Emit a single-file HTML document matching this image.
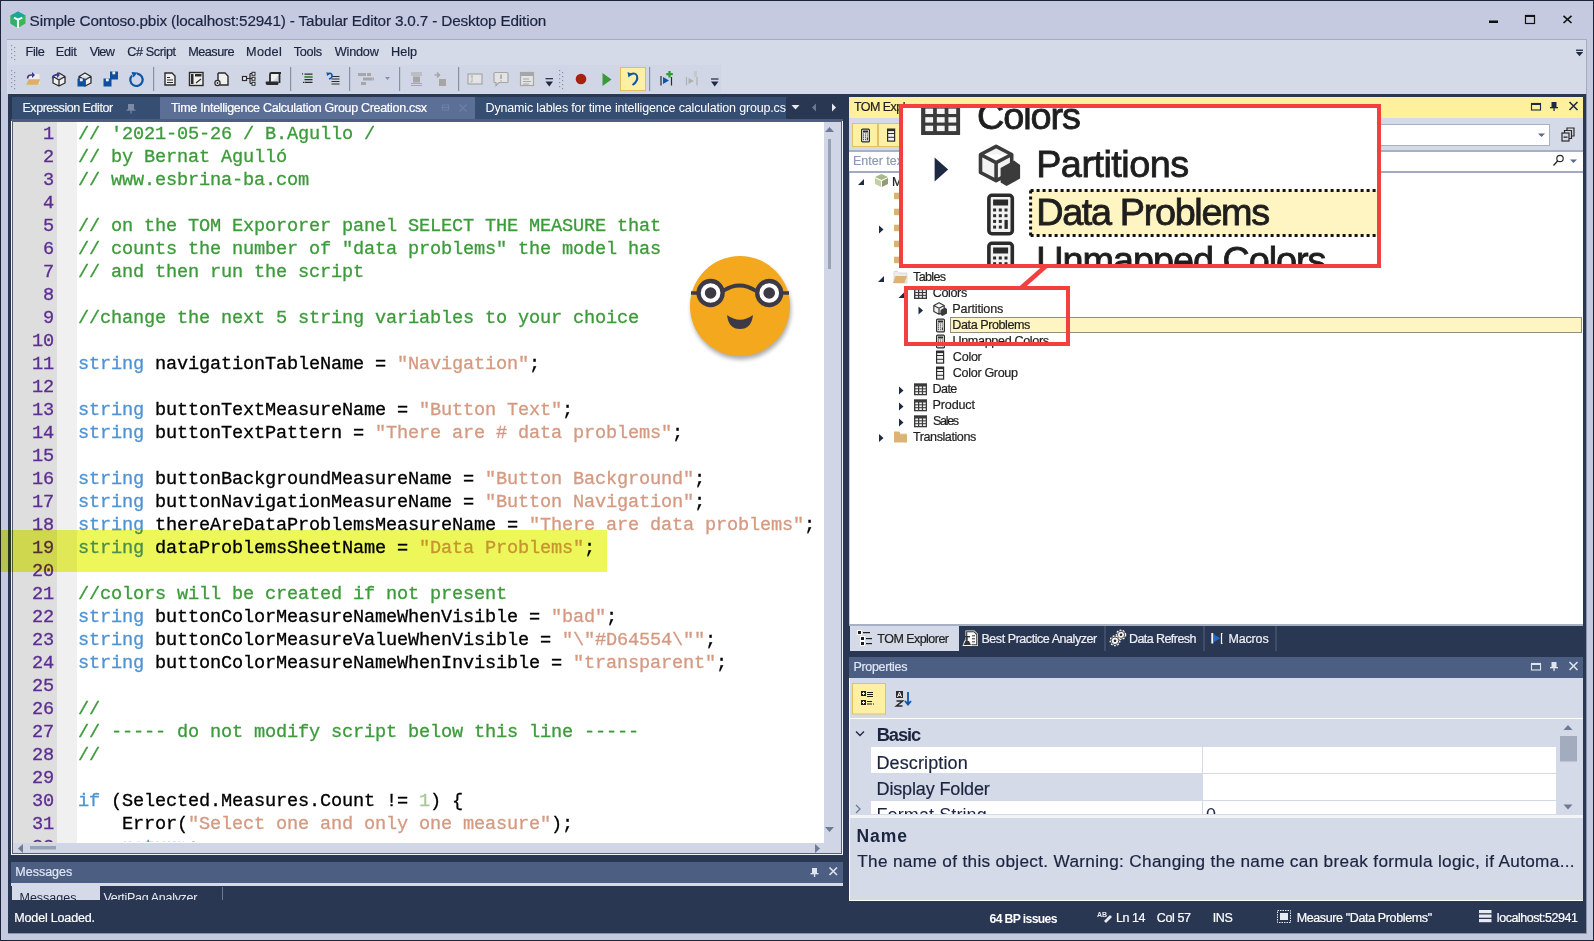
<!DOCTYPE html>
<html><head><meta charset="utf-8">
<style>
*{margin:0;padding:0;box-sizing:border-box}
html,body{width:1594px;height:941px;overflow:hidden;background:#c5cae0;font-family:"Liberation Sans",sans-serif}
.a{position:absolute}
.t{position:absolute;white-space:pre;line-height:1}
svg{position:absolute;overflow:visible}
.code{position:absolute;font-family:"Liberation Mono",monospace;white-space:pre;color:#000;-webkit-text-stroke:0.3px currentColor}
.c{color:#3c9b3a}.k{color:#4f93d3}.s{color:#d49a82}.n{color:#a8c79b}
</style></head><body>

<div class="a" style="left:0px;top:0px;width:1594px;height:941px;background:#c5cae0;border:1px solid #1b2438"></div>
<div class="a" style="left:7px;top:39px;width:1580px;height:55px;background:#d5dae9;border-top:1px solid #a4acc2;border-right:1px solid #a4acc2"></div>
<div class="a" style="left:8px;top:65px;width:713px;height:28px;background:#d0d6e5;"></div>
<div class="a" style="left:8px;top:94px;width:1579px;height:840px;background:#8d94aa;"></div>
<div class="a" style="left:8px;top:94px;width:1578px;height:839px;background:#293753;"></div>
<div class="a" style="left:12px;top:97px;width:148px;height:22px;background:#364e71;"></div>
<div class="a" style="left:160px;top:97px;width:315px;height:22px;background:#5b6f97;"></div>
<div class="a" style="left:475px;top:97px;width:311px;height:22px;background:#364e71;"></div>
<div class="a" style="left:11px;top:119px;width:832px;height:3px;background:#4a5e80;"></div>
<div class="a" style="left:11px;top:121px;width:832px;height:734px;background:#f4f5f9;"></div>
<div class="a" style="left:12px;top:121px;width:830px;height:733px;background:#5a5e66;"></div>
<div class="a" style="left:13px;top:122px;width:828px;height:731px;background:#fff;"></div>
<div class="a" style="left:13px;top:122px;width:44px;height:721px;background:#dedede;"></div>
<div class="a" style="left:57px;top:122px;width:20px;height:721px;background:#f0f0f0;"></div>
<div class="a" style="left:824px;top:122px;width:17px;height:721px;background:#d0d6e5;"></div>
<div class="a" style="left:13px;top:843px;width:828px;height:10px;background:#d0d6e5;"></div>
<div class="a" style="left:849px;top:97px;width:734px;height:21px;background:#fff09b;"></div>
<div class="a" style="left:849px;top:118px;width:734px;height:33px;background:#d5dae9;"></div>
<div class="a" style="left:849px;top:150px;width:734px;height:2px;background:#a8b0c4;"></div>
<div class="a" style="left:849px;top:152px;width:734px;height:19px;background:#fff;"></div>
<div class="a" style="left:849px;top:171px;width:734px;height:2px;background:#a3abc0;"></div>
<div class="a" style="left:849px;top:173px;width:734px;height:451px;background:#fff;"></div>
<div class="a" style="left:849px;top:173px;width:1px;height:451px;background:#c8cedc;"></div>
<div class="a" style="left:849px;top:624px;width:734px;height:2px;background:#a8b0c4;"></div>
<div class="a" style="left:850px;top:626px;width:109px;height:25px;background:#d5dae9;"></div>
<div class="a" style="left:849px;top:657px;width:734px;height:21px;background:#4c5f82;"></div>
<div class="a" style="left:849px;top:678px;width:734px;height:223px;background:#fff;"></div>
<div class="a" style="left:850px;top:678px;width:733px;height:222px;background:#d5dae9;"></div>
<div class="a" style="left:849px;top:718px;width:734px;height:1px;background:#fff;"></div>
<div class="a" style="left:11px;top:862px;width:832px;height:21px;background:#4c5f82;"></div>
<div class="a" style="left:11px;top:883px;width:832px;height:3px;background:#d5dae9;"></div>
<div class="a" style="left:12px;top:886px;width:88px;height:14px;background:#d5dae9;"></div>
<div class="a" style="left:871px;top:747px;width:331px;height:26px;background:#fff;"></div>
<div class="a" style="left:1203px;top:747px;width:353px;height:26px;background:#fff;"></div>
<div class="a" style="left:1203px;top:774px;width:353px;height:26px;background:#fff;"></div>
<div class="a" style="left:871px;top:801px;width:331px;height:13px;background:#fff;"></div>
<div class="a" style="left:1203px;top:801px;width:353px;height:13px;background:#fff;"></div>
<div class="a" style="left:871px;top:773px;width:685px;height:1px;background:#d3d9e6;"></div>
<div class="a" style="left:871px;top:800px;width:685px;height:1px;background:#d3d9e6;"></div>
<div class="a" style="left:1202px;top:747px;width:1px;height:67px;background:#d3d9e6;"></div>
<div class="a" style="left:850px;top:815px;width:733px;height:3px;background:#f2f4f8;"></div>
<div class="a" style="left:871px;top:801px;width:685px;height:13px;overflow:hidden"><div class="t" style="left:5.5px;top:5px;font-size:18px;color:#1b2540;letter-spacing:0.1px">Format String</div><div class="t" style="left:335px;top:5px;font-size:18px;color:#1b2540">0</div></div>
<div class="a" style="left:12px;top:886px;width:830px;height:14px;overflow:hidden"><div class="t" style="left:7.5px;top:5.5px;font-size:12.5px;color:#1b2540">Messages</div><div class="t" style="left:91.5px;top:5.5px;font-size:12.5px;color:#e8ebf2;letter-spacing:-0.3px">VertiPaq Analyzer</div><div class="a" style="left:210px;top:1px;width:1px;height:13px;background:#6a7896"></div></div>
<div class="a" style="left:475px;top:97px;width:311px;height:22px;overflow:hidden"><div class="t" style="left:10.6px;top:4.7px;font-size:12.5px;color:#fff;letter-spacing:-0.17px">Dynamic lables for time intelligence calculation group.csx</div></div>
<div class="a" style="left:13px;top:122px;width:811px;height:720px;overflow:hidden">
<div class="code" style="left:65px;top:4.35px;font-size:18.6px;line-height:1;letter-spacing:-0.16px"><span class="c">// &#x27;2021-05-26 / B.Agullo /</span></div>
<div class="code" style="left:0px;width:41px;text-align:right;top:4.35px;font-size:18.6px;line-height:1;letter-spacing:-0.16px;color:#5c2d91">1</div>
<div class="code" style="left:65px;top:27.35px;font-size:18.6px;line-height:1;letter-spacing:-0.16px"><span class="c">// by Bernat Agulló</span></div>
<div class="code" style="left:0px;width:41px;text-align:right;top:27.35px;font-size:18.6px;line-height:1;letter-spacing:-0.16px;color:#5c2d91">2</div>
<div class="code" style="left:65px;top:50.35px;font-size:18.6px;line-height:1;letter-spacing:-0.16px"><span class="c">// www.esbrina-ba.com</span></div>
<div class="code" style="left:0px;width:41px;text-align:right;top:50.35px;font-size:18.6px;line-height:1;letter-spacing:-0.16px;color:#5c2d91">3</div>
<div class="code" style="left:65px;top:73.35px;font-size:18.6px;line-height:1;letter-spacing:-0.16px"></div>
<div class="code" style="left:0px;width:41px;text-align:right;top:73.35px;font-size:18.6px;line-height:1;letter-spacing:-0.16px;color:#5c2d91">4</div>
<div class="code" style="left:65px;top:96.35px;font-size:18.6px;line-height:1;letter-spacing:-0.16px"><span class="c">// on the TOM Expororer panel SELECT THE MEASURE that</span></div>
<div class="code" style="left:0px;width:41px;text-align:right;top:96.35px;font-size:18.6px;line-height:1;letter-spacing:-0.16px;color:#5c2d91">5</div>
<div class="code" style="left:65px;top:119.35px;font-size:18.6px;line-height:1;letter-spacing:-0.16px"><span class="c">// counts the number of &quot;data problems&quot; the model has</span></div>
<div class="code" style="left:0px;width:41px;text-align:right;top:119.35px;font-size:18.6px;line-height:1;letter-spacing:-0.16px;color:#5c2d91">6</div>
<div class="code" style="left:65px;top:142.35px;font-size:18.6px;line-height:1;letter-spacing:-0.16px"><span class="c">// and then run the script</span></div>
<div class="code" style="left:0px;width:41px;text-align:right;top:142.35px;font-size:18.6px;line-height:1;letter-spacing:-0.16px;color:#5c2d91">7</div>
<div class="code" style="left:65px;top:165.35px;font-size:18.6px;line-height:1;letter-spacing:-0.16px"></div>
<div class="code" style="left:0px;width:41px;text-align:right;top:165.35px;font-size:18.6px;line-height:1;letter-spacing:-0.16px;color:#5c2d91">8</div>
<div class="code" style="left:65px;top:188.35px;font-size:18.6px;line-height:1;letter-spacing:-0.16px"><span class="c">//change the next 5 string variables to your choice</span></div>
<div class="code" style="left:0px;width:41px;text-align:right;top:188.35px;font-size:18.6px;line-height:1;letter-spacing:-0.16px;color:#5c2d91">9</div>
<div class="code" style="left:65px;top:211.35px;font-size:18.6px;line-height:1;letter-spacing:-0.16px"></div>
<div class="code" style="left:0px;width:41px;text-align:right;top:211.35px;font-size:18.6px;line-height:1;letter-spacing:-0.16px;color:#5c2d91">10</div>
<div class="code" style="left:65px;top:234.35px;font-size:18.6px;line-height:1;letter-spacing:-0.16px"><span class="k">string</span> navigationTableName = <span class="s">"Navigation"</span>;</div>
<div class="code" style="left:0px;width:41px;text-align:right;top:234.35px;font-size:18.6px;line-height:1;letter-spacing:-0.16px;color:#5c2d91">11</div>
<div class="code" style="left:65px;top:257.35px;font-size:18.6px;line-height:1;letter-spacing:-0.16px"></div>
<div class="code" style="left:0px;width:41px;text-align:right;top:257.35px;font-size:18.6px;line-height:1;letter-spacing:-0.16px;color:#5c2d91">12</div>
<div class="code" style="left:65px;top:280.35px;font-size:18.6px;line-height:1;letter-spacing:-0.16px"><span class="k">string</span> buttonTextMeasureName = <span class="s">"Button Text"</span>;</div>
<div class="code" style="left:0px;width:41px;text-align:right;top:280.35px;font-size:18.6px;line-height:1;letter-spacing:-0.16px;color:#5c2d91">13</div>
<div class="code" style="left:65px;top:303.35px;font-size:18.6px;line-height:1;letter-spacing:-0.16px"><span class="k">string</span> buttonTextPattern = <span class="s">"There are # data problems"</span>;</div>
<div class="code" style="left:0px;width:41px;text-align:right;top:303.35px;font-size:18.6px;line-height:1;letter-spacing:-0.16px;color:#5c2d91">14</div>
<div class="code" style="left:65px;top:326.35px;font-size:18.6px;line-height:1;letter-spacing:-0.16px"></div>
<div class="code" style="left:0px;width:41px;text-align:right;top:326.35px;font-size:18.6px;line-height:1;letter-spacing:-0.16px;color:#5c2d91">15</div>
<div class="code" style="left:65px;top:349.35px;font-size:18.6px;line-height:1;letter-spacing:-0.16px"><span class="k">string</span> buttonBackgroundMeasureName = <span class="s">"Button Background"</span>;</div>
<div class="code" style="left:0px;width:41px;text-align:right;top:349.35px;font-size:18.6px;line-height:1;letter-spacing:-0.16px;color:#5c2d91">16</div>
<div class="code" style="left:65px;top:372.35px;font-size:18.6px;line-height:1;letter-spacing:-0.16px"><span class="k">string</span> buttonNavigationMeasureName = <span class="s">"Button Navigation"</span>;</div>
<div class="code" style="left:0px;width:41px;text-align:right;top:372.35px;font-size:18.6px;line-height:1;letter-spacing:-0.16px;color:#5c2d91">17</div>
<div class="code" style="left:65px;top:395.35px;font-size:18.6px;line-height:1;letter-spacing:-0.16px"><span class="k">string</span> thereAreDataProblemsMeasureName = <span class="s">"There are data problems"</span>;</div>
<div class="code" style="left:0px;width:41px;text-align:right;top:395.35px;font-size:18.6px;line-height:1;letter-spacing:-0.16px;color:#5c2d91">18</div>
<div class="code" style="left:65px;top:418.35px;font-size:18.6px;line-height:1;letter-spacing:-0.16px"><span class="k">string</span> dataProblemsSheetName = <span class="s">"Data Problems"</span>;</div>
<div class="code" style="left:0px;width:41px;text-align:right;top:418.35px;font-size:18.6px;line-height:1;letter-spacing:-0.16px;color:#5c2d91">19</div>
<div class="code" style="left:65px;top:441.35px;font-size:18.6px;line-height:1;letter-spacing:-0.16px"></div>
<div class="code" style="left:0px;width:41px;text-align:right;top:441.35px;font-size:18.6px;line-height:1;letter-spacing:-0.16px;color:#5c2d91">20</div>
<div class="code" style="left:65px;top:464.35px;font-size:18.6px;line-height:1;letter-spacing:-0.16px"><span class="c">//colors will be created if not present</span></div>
<div class="code" style="left:0px;width:41px;text-align:right;top:464.35px;font-size:18.6px;line-height:1;letter-spacing:-0.16px;color:#5c2d91">21</div>
<div class="code" style="left:65px;top:487.35px;font-size:18.6px;line-height:1;letter-spacing:-0.16px"><span class="k">string</span> buttonColorMeasureNameWhenVisible = <span class="s">"bad"</span>;</div>
<div class="code" style="left:0px;width:41px;text-align:right;top:487.35px;font-size:18.6px;line-height:1;letter-spacing:-0.16px;color:#5c2d91">22</div>
<div class="code" style="left:65px;top:510.35px;font-size:18.6px;line-height:1;letter-spacing:-0.16px"><span class="k">string</span> buttonColorMeasureValueWhenVisible = <span class="s">"\&quot;#D64554\&quot;"</span>;</div>
<div class="code" style="left:0px;width:41px;text-align:right;top:510.35px;font-size:18.6px;line-height:1;letter-spacing:-0.16px;color:#5c2d91">23</div>
<div class="code" style="left:65px;top:533.35px;font-size:18.6px;line-height:1;letter-spacing:-0.16px"><span class="k">string</span> buttonColorMeasureNameWhenInvisible = <span class="s">"transparent"</span>;</div>
<div class="code" style="left:0px;width:41px;text-align:right;top:533.35px;font-size:18.6px;line-height:1;letter-spacing:-0.16px;color:#5c2d91">24</div>
<div class="code" style="left:65px;top:556.35px;font-size:18.6px;line-height:1;letter-spacing:-0.16px"></div>
<div class="code" style="left:0px;width:41px;text-align:right;top:556.35px;font-size:18.6px;line-height:1;letter-spacing:-0.16px;color:#5c2d91">25</div>
<div class="code" style="left:65px;top:579.35px;font-size:18.6px;line-height:1;letter-spacing:-0.16px"><span class="c">//</span></div>
<div class="code" style="left:0px;width:41px;text-align:right;top:579.35px;font-size:18.6px;line-height:1;letter-spacing:-0.16px;color:#5c2d91">26</div>
<div class="code" style="left:65px;top:602.35px;font-size:18.6px;line-height:1;letter-spacing:-0.16px"><span class="c">// ----- do not modify script below this line -----</span></div>
<div class="code" style="left:0px;width:41px;text-align:right;top:602.35px;font-size:18.6px;line-height:1;letter-spacing:-0.16px;color:#5c2d91">27</div>
<div class="code" style="left:65px;top:625.35px;font-size:18.6px;line-height:1;letter-spacing:-0.16px"><span class="c">//</span></div>
<div class="code" style="left:0px;width:41px;text-align:right;top:625.35px;font-size:18.6px;line-height:1;letter-spacing:-0.16px;color:#5c2d91">28</div>
<div class="code" style="left:65px;top:648.35px;font-size:18.6px;line-height:1;letter-spacing:-0.16px"></div>
<div class="code" style="left:0px;width:41px;text-align:right;top:648.35px;font-size:18.6px;line-height:1;letter-spacing:-0.16px;color:#5c2d91">29</div>
<div class="code" style="left:65px;top:671.35px;font-size:18.6px;line-height:1;letter-spacing:-0.16px"><span class="k">if</span> (Selected.Measures.Count != <span class="n">1</span>) {</div>
<div class="code" style="left:0px;width:41px;text-align:right;top:671.35px;font-size:18.6px;line-height:1;letter-spacing:-0.16px;color:#5c2d91">30</div>
<div class="code" style="left:65px;top:694.35px;font-size:18.6px;line-height:1;letter-spacing:-0.16px">    Error(<span class="s">"Select one and only one measure"</span>);</div>
<div class="code" style="left:0px;width:41px;text-align:right;top:694.35px;font-size:18.6px;line-height:1;letter-spacing:-0.16px;color:#5c2d91">31</div>
<div class="code" style="left:65px;top:717.35px;font-size:18.6px;line-height:1;letter-spacing:-0.16px">    <span class="k">return</span>;</div>
<div class="code" style="left:0px;width:41px;text-align:right;top:717.35px;font-size:18.6px;line-height:1;letter-spacing:-0.16px;color:#5c2d91">32</div>
</div>
<svg style="left:0;top:0" width="1594" height="941" viewBox="0 0 1594 941"><path d="M18 11.5 L25.5 15.5 L25.5 23.5 L18 28 L10.5 23.5 L10.5 15.5 Z" fill="#3cb55a"/><path d="M10.5 15.5 L18 19 L18 28 L10.5 23.5 Z" fill="#33ae6a"/><path d="M18 11.5 L25.5 15.5 L18 19.2 L10.5 15.5 Z" fill="#17a89c"/><path d="M14 17.6 L18 19.6 L22.3 17.6 M18 19.5 V28" stroke="#f4fff4" stroke-width="2.1" fill="none"/><rect x="1489" y="20.5" width="9" height="2.5" fill="#111"/><rect x="1525.5" y="15.5" width="9" height="8" fill="none" stroke="#111" stroke-width="1.2"/><rect x="1525" y="15" width="10" height="2" fill="#111"/><path d="M1563.5 15.8 L1571.5 23 M1571.5 15.8 L1563.5 23" stroke="#111" stroke-width="1.6"/><rect x="1576" y="49.6" width="7" height="1.3" fill="#1e2a44"/><path d="M1575.8 52 h7.4 l-3.7 4.2 Z" fill="#1e2a44"/><rect x="11" y="45" width="1.2" height="1.2" fill="#8a93ac"/><rect x="14" y="47" width="1.2" height="1.2" fill="#8a93ac"/><rect x="11" y="49" width="1.2" height="1.2" fill="#8a93ac"/><rect x="14" y="51" width="1.2" height="1.2" fill="#8a93ac"/><rect x="11" y="53" width="1.2" height="1.2" fill="#8a93ac"/><rect x="14" y="55" width="1.2" height="1.2" fill="#8a93ac"/><rect x="11" y="57" width="1.2" height="1.2" fill="#8a93ac"/><rect x="14" y="59" width="1.2" height="1.2" fill="#8a93ac"/><rect x="11" y="70" width="1.2" height="1.2" fill="#8a93ac"/><rect x="14" y="72" width="1.2" height="1.2" fill="#8a93ac"/><rect x="11" y="74" width="1.2" height="1.2" fill="#8a93ac"/><rect x="14" y="76" width="1.2" height="1.2" fill="#8a93ac"/><rect x="11" y="78" width="1.2" height="1.2" fill="#8a93ac"/><rect x="14" y="80" width="1.2" height="1.2" fill="#8a93ac"/><rect x="11" y="82" width="1.2" height="1.2" fill="#8a93ac"/><rect x="14" y="84" width="1.2" height="1.2" fill="#8a93ac"/><rect x="11" y="86" width="1.2" height="1.2" fill="#8a93ac"/><rect x="14" y="88" width="1.2" height="1.2" fill="#8a93ac"/><rect x="559" y="70" width="1.2" height="1.2" fill="#8a93ac"/><rect x="562" y="72" width="1.2" height="1.2" fill="#8a93ac"/><rect x="559" y="74" width="1.2" height="1.2" fill="#8a93ac"/><rect x="562" y="76" width="1.2" height="1.2" fill="#8a93ac"/><rect x="559" y="78" width="1.2" height="1.2" fill="#8a93ac"/><rect x="562" y="80" width="1.2" height="1.2" fill="#8a93ac"/><rect x="559" y="82" width="1.2" height="1.2" fill="#8a93ac"/><rect x="562" y="84" width="1.2" height="1.2" fill="#8a93ac"/><rect x="559" y="86" width="1.2" height="1.2" fill="#8a93ac"/><rect x="562" y="88" width="1.2" height="1.2" fill="#8a93ac"/><rect x="153.0" y="67" width="1.2" height="24" fill="#8890a8"/><rect x="290.0" y="67" width="1.2" height="24" fill="#8890a8"/><rect x="349.0" y="67" width="1.2" height="24" fill="#8890a8"/><rect x="399.0" y="67" width="1.2" height="24" fill="#8890a8"/><rect x="458.0" y="67" width="1.2" height="24" fill="#8890a8"/><rect x="649.0" y="67" width="1.2" height="24" fill="#8890a8"/><rect x="28.5" y="73.5" width="11.5" height="11" fill="#eeeeee" stroke="#d6d6d6" stroke-width="1"/><path d="M26.3 84.8 L28.8 79.2 h11.4 l-2.2 5.6 Z" fill="#dcb06a"/><path d="M27.6 78.6 q0 -3.6 3.6 -3.6 h1.2" stroke="#3d3b8e" stroke-width="1.7" fill="none"/><path d="M32 72 l3 3 l-3 3 Z" fill="#3d3b8e"/><g transform="translate(52,72) scale(1.0)"><path d="M7 1 L13 4.5 L13 11 L7 14 L1 11 L1 4.5 Z M1 4.5 L7 8 L13 4.5 M7 8 L7 14" fill="#f0f0f0" stroke="#2b2b2b" stroke-width="1.30" stroke-linejoin="round"/></g><path d="M52.6 78.6 q0 -3.6 3.6 -3.6 h1.2" stroke="#3d3b8e" stroke-width="1.7" fill="none"/><path d="M57 72 l3 3 l-3 3 Z" fill="#3d3b8e"/><g transform="translate(78,72) scale(1.0)"><path d="M7 1 L13 4.5 L13 11 L7 14 L1 11 L1 4.5 Z M1 4.5 L7 8 L13 4.5 M7 8 L7 14" fill="#f0f0f0" stroke="#2b2b2b" stroke-width="1.30" stroke-linejoin="round"/></g><rect x="77.5" y="78.5" width="8" height="8" fill="#0e4fa0"/><rect x="79.9" y="78.5" width="2.8" height="2.8" fill="#f0f0f0"/><rect x="110" y="71.5" width="8" height="8" fill="#0e4fa0"/><rect x="112.4" y="71.5" width="2.8" height="2.8" fill="#f0f0f0"/><rect x="103.5" y="78.5" width="8" height="8" fill="#0e4fa0"/><rect x="105.9" y="78.5" width="2.8" height="2.8" fill="#f0f0f0"/><path d="M132 75.5 A6.2 6.2 0 1 0 137 73.6" stroke="#0d55a8" stroke-width="2.2" fill="none"/><path d="M131.5 72 L137.5 72.5 L133.5 77.5 Z" fill="#0d55a8"/><path d="M165 73 h7 l3 3 v9 h-10 Z" fill="#f0f0f0" stroke="#2b2b2b" stroke-width="1.4"/><path d="M167 77.5 h3 M167 80 h6 M167 82.5 h6" stroke="#2b2b2b" stroke-width="1.2"/><rect x="189.5" y="72.5" width="13.5" height="13" fill="#f0f0f0" stroke="#2b2b2b" stroke-width="1.4"/><rect x="191" y="74" width="2.5" height="10" fill="#2b2b2b"/><rect x="195" y="74" width="6.5" height="2.5" fill="#2b2b2b"/><path d="M196 83 l5 -4" stroke="#2b2b2b" stroke-width="1.2"/><path d="M218 73 h7 l3 3 v9 h-8" fill="#f0f0f0" stroke="#2b2b2b" stroke-width="1.4"/><path d="M218 73 v7" stroke="#2b2b2b" stroke-width="1.4"/><circle cx="217.5" cy="83" r="2.6" fill="#f0f0f0" stroke="#2b2b2b" stroke-width="1.2"/><circle cx="217.5" cy="83" r="0.9" fill="#2b2b2b"/><rect x="242.5" y="76.5" width="4" height="4" fill="#f0f0f0" stroke="#2b2b2b" stroke-width="1.2"/><path d="M246.5 78.5 h3.5 M250 73.5 v10 M250 73.5 h2 M250 78.5 h2 M250 83.5 h2" stroke="#2b2b2b" stroke-width="1.2" fill="none"/><rect x="252" y="72.3" width="3" height="3" fill="#f0f0f0" stroke="#2b2b2b" stroke-width="1"/><rect x="252" y="77.3" width="3" height="3" fill="#f0f0f0" stroke="#2b2b2b" stroke-width="1"/><rect x="252" y="82.3" width="3" height="3" fill="#f0f0f0" stroke="#2b2b2b" stroke-width="1"/><path d="M270 84 V74.5 q0 -1.5 1.5 -1.5 H281 M270 84 H267.5 q-1 0 -1 -1 v-0.5 h11 v1.5 H270 M279.5 73 v10" fill="#f0f0f0" stroke="#2b2b2b" stroke-width="1.8" stroke-linejoin="round"/><path d="M302 73.8 h1 M304.5 74.2 h8 M304.5 77 h8 M304.5 79.6 h8 M304.5 82.4 h8 M303 82.4 h1" stroke="#2b2b2b" stroke-width="1.2"/><path d="M304.5 77 h8" stroke="#2aa02a" stroke-width="1.2"/><path d="M331.5 76.5 h8 M331.5 79 h8 M331.5 81.5 h8 M331.5 84 h8" stroke="#2b2b2b" stroke-width="1.2"/><path d="M327 74 q4 -2 5 1 q0.5 3 -3 4" stroke="#0d55a8" stroke-width="1.6" fill="none"/><path d="M326.5 72 l0.5 4 l3 -2 Z" fill="#0d55a8"/><rect x="358" y="73" width="8" height="3" fill="#a6a6a6"/><rect x="367" y="73" width="4" height="3" fill="#a6a6a6"/><rect x="363" y="77.5" width="9" height="3" fill="#a6a6a6"/><rect x="372.5" y="77.5" width="1.5" height="3" fill="#a6a6a6"/><rect x="361" y="82" width="5" height="3" fill="#a6a6a6"/><path d="M385 77 h5 l-2.5 3 Z" fill="#8290ac"/><path d="M411 73 h11 M411 75 h11 M411 83.5 h11 M411 85.5 h11" stroke="#a6a6a6" stroke-width="1"/><rect x="413" y="76.5" width="7" height="6" fill="#a6a6a6"/><path d="M434.5 75 h5 M437 72.5 l2.5 2.5 l-2.5 2.5" stroke="#a6a6a6" stroke-width="1.6" fill="none"/><rect x="439" y="79" width="7" height="7" fill="#a6a6a6"/><rect x="468" y="74" width="14" height="10" fill="#e4e4e4" stroke="#a6a6a6" stroke-width="1.2"/><path d="M470.5 76 h1.5 v6 h-1.5 M472 76 h1" stroke="#a6a6a6" stroke-width="0.8" fill="none"/><path d="M495 72.5 h12 q1 0 1 1 v8 q0 1 -1 1 h-8 l-3 3 v-3 h-1 q-1 0 -1 -1 v-8 q0 -1 1 -1 Z" fill="#e4e4e4" stroke="#a6a6a6" stroke-width="1.2"/><path d="M501 74.5 v4.5 M501 80.5 v1" stroke="#a6a6a6" stroke-width="1.6"/><rect x="520.5" y="72.5" width="13" height="13" fill="#e4e4e4" stroke="#a6a6a6" stroke-width="1.2"/><rect x="520.5" y="72.5" width="13" height="3.5" fill="#a6a6a6"/><path d="M523 79 h6 M523 81.5 h8 M523 84 h6" stroke="#a6a6a6" stroke-width="1"/><path d="M545.5 78.7 h7.5" stroke="#1e2a44" stroke-width="1.2"/><path d="M545.5 81.5 h7.5 l-3.75 5 Z" fill="#1e2a44"/><circle cx="581" cy="79" r="5.3" fill="#a8200f"/><path d="M602.5 73 L611.5 79.5 L602.5 86 Z" fill="#3a9a3a"/><rect x="620.5" y="67.5" width="25" height="23" fill="#fdf0a3" stroke="#e2c062" stroke-width="1"/><path d="M630.5 74.5 q5 -2.5 6.5 1.5 q1.5 5 -4.5 9" stroke="#0d55a8" stroke-width="2" fill="none"/><path d="M627.5 72 l1 5.5 l4 -3.5 Z" fill="#0d55a8"/><path d="M661 76 v9.5 M671.5 77 v8.5" stroke="#2b2b2b" stroke-width="1.2"/><path d="M663 77 v7 l6 -3.5 Z" fill="#0d55a8"/><path d="M669.5 71 v6.5 M666.3 74.2 h6.5" stroke="#2aa02a" stroke-width="2.2"/><path d="M686.5 77 v8.5 M697 77 v8.5" stroke="#b0b0b0" stroke-width="1.2"/><path d="M688.5 78 v6 l5.5 -3 Z" fill="#b0b0b0"/><rect x="694" y="71" width="3" height="6" fill="#c8c8c8"/><path d="M711 79 h7.5" stroke="#1e2a44" stroke-width="1.2"/><path d="M711 81.5 h7.5 l-3.75 5 Z" fill="#1e2a44"/></svg>
<svg style="left:0;top:0" width="1594" height="941" viewBox="0 0 1594 941"><g fill="#7d8aa6"><rect x="128" y="104" width="6" height="6"/><rect x="126.5" y="109.5" width="9" height="1.2"/><rect x="130.5" y="110.5" width="1.2" height="3"/></g><g fill="#6e80a6"><rect x="442.5" y="105" width="6" height="5" fill="none" stroke="#6e80a6"/><rect x="441" y="107" width="9" height="1"/></g><path d="M459.5 104.5 L466.5 111.5 M466.5 104.5 L459.5 111.5" stroke="#6e80a6" stroke-width="1.2"/><path d="M791.5 105 h8 l-4 4.5 Z" fill="#e6e9f2"/><path d="M816 103.5 v8 l-4 -4 Z" fill="#6a7896"/><path d="M832 103.5 v8 l4 -4 Z" fill="#e6e9f2"/><path d="M825 132 h9 l-4.5 -5 Z" fill="#6e7a96"/><rect x="828" y="139" width="3" height="130" fill="#98a2b6"/><path d="M825 827 h9 l-4.5 5 Z" fill="#6e7a96"/><path d="M23 844 v9 l-5 -4.5 Z" fill="#6e7a96"/><rect x="30" y="846" width="26" height="3.5" fill="#98a2b6"/><path d="M815 844 v9 l5 -4.5 Z" fill="#6e7a96"/><rect x="1531.5" y="103.5" width="9" height="6.5" fill="none" stroke="#1e2a44" stroke-width="1.1"/><rect x="1531" y="103" width="10" height="2" fill="#1e2a44"/><g fill="#1e2a44"><rect x="1551.5" y="102" width="5" height="5.5"/><rect x="1550" y="107" width="8" height="1.3"/><rect x="1553.4" y="108" width="1.3" height="3"/></g><path d="M1569.5 102 L1577.5 110 M1577.5 102 L1569.5 110" stroke="#1e2a44" stroke-width="1.6"/><rect x="1531.5" y="663.5" width="9" height="6.5" fill="none" stroke="#e0e4ee" stroke-width="1.1"/><rect x="1531" y="663" width="10" height="2" fill="#e0e4ee"/><g fill="#e0e4ee"><rect x="1551.5" y="662" width="5" height="5.5"/><rect x="1550" y="667" width="8" height="1.3"/><rect x="1553.4" y="668" width="1.3" height="3"/></g><path d="M1569.5 662 L1577.5 670 M1577.5 662 L1569.5 670" stroke="#e0e4ee" stroke-width="1.6"/><g fill="#e0e4ee"><rect x="812" y="868" width="5" height="5.5"/><rect x="810.5" y="873" width="8" height="1.3"/><rect x="813.9" y="874" width="1.3" height="3"/></g><path d="M829.5 867.5 L837 875 M837 867.5 L829.5 875" stroke="#e0e4ee" stroke-width="1.6"/><rect x="852.5" y="123.5" width="25" height="23" fill="#fdefa3" stroke="#e2c267" stroke-width="1"/><rect x="878.5" y="123.5" width="25" height="23" fill="#fdefa3" stroke="#e2c267" stroke-width="1"/><g transform="translate(861,128.5) scale(1.0)"><rect x="0.6" y="0.6" width="7.8" height="12.8" rx="1" fill="#f2f2f2" stroke="#2b2b2b" stroke-width="1.2"/><rect x="2" y="2" width="5" height="2" fill="#2b2b2b"/><rect x="2.00" y="5.00" width="1" height="1" fill="#2b2b2b"/><rect x="3.90" y="5.00" width="1" height="1" fill="#2b2b2b"/><rect x="5.80" y="5.00" width="1" height="1" fill="#2b2b2b"/><rect x="2.00" y="6.90" width="1" height="1" fill="#2b2b2b"/><rect x="3.90" y="6.90" width="1" height="1" fill="#2b2b2b"/><rect x="5.80" y="6.90" width="1" height="1" fill="#2b2b2b"/><rect x="2.00" y="8.80" width="1" height="1" fill="#2b2b2b"/><rect x="3.90" y="8.80" width="1" height="1" fill="#2b2b2b"/><rect x="2.00" y="10.70" width="1" height="1" fill="#2b2b2b"/><rect x="3.90" y="10.70" width="1" height="1" fill="#2b2b2b"/><rect x="5.8" y="8.8" width="1.1" height="3" fill="#2b2b2b"/></g><g transform="translate(887,128.5) scale(1.0)"><rect x="0.6" y="0.6" width="7" height="12" fill="#f2f2f2" stroke="#2b2b2b" stroke-width="1.2"/><rect x="0.6" y="0.6" width="7" height="2" fill="#2b2b2b"/><path d="M0.6 5 h7 M0.6 8.8 h7" stroke="#2b2b2b" stroke-width="1"/></g><rect x="1375.5" y="124.5" width="174" height="21" fill="#fff" stroke="#a8b0c4" stroke-width="1"/><path d="M1538 133.5 h7 l-3.5 3.5 Z" fill="#5a6a8a"/><g fill="none" stroke="#2b2b2b" stroke-width="1.2"><rect x="1562" y="133" width="7" height="8"/><path d="M1564.5 133 v-2.5 h7 v8 h-2.5 M1567 130.5 v-2.5 h7 v8 h-2.5"/></g><rect x="1563.5" y="136.5" width="4" height="1.3" fill="#2b2b2b"/><circle cx="1560" cy="158.5" r="3.2" fill="none" stroke="#2b2b2b" stroke-width="1.2"/><path d="M1557.8 160.8 L1553.5 165.5" stroke="#2b2b2b" stroke-width="1.4"/><path d="M1570 159.5 h7 l-3.5 3.5 Z" fill="#5a6a8a"/><path d="M864 179 L864 185 L858 185 Z" fill="#1e2a44"/><g transform="translate(875,174)"><path d="M6.5 0 L13 3 L6.5 6 L0 3 Z" fill="#a9b98a"/><path d="M0 4 L6 7 L6 13 L0 10 Z" fill="#c4cfa8"/><path d="M13 4 L7 7 L7 13 L13 10 Z" fill="#8f9f70"/></g><rect x="894" y="192.7" width="6" height="6.5" fill="#dcb377"/><rect x="894" y="208.7" width="6" height="6.5" fill="#dcb377"/><rect x="894" y="224.7" width="6" height="6.5" fill="#dcb377"/><rect x="894" y="240.7" width="6" height="6.5" fill="#dcb377"/><rect x="894" y="256.7" width="6" height="6.5" fill="#dcb377"/><path d="M879 225.5 L883.5 229.5 L879 233.5 Z" fill="#1e2a44"/><path d="M884 276 L884 282 L878 282 Z" fill="#1e2a44"/><path d="M894 271.5 h4 l1.5 1.5 h7.5 v10 h-13 Z" fill="#ececec" stroke="#d4d4d4" stroke-width="0.8"/><path d="M893 283 L895.5 276 h11.5 l-2.5 7 Z" fill="#dcb377"/><path d="M904.5 292 L904.5 298 L898.5 298 Z" fill="#1e2a44"/><g transform="translate(914,287) scale(1.0)"><rect x="0" y="0" width="13" height="12" fill="#3b3b3b"/><rect x="1.40" y="3.20" width="2.6" height="1.8" fill="#f4f4f4"/><rect x="5.25" y="3.20" width="2.6" height="1.8" fill="#f4f4f4"/><rect x="9.10" y="3.20" width="2.6" height="1.8" fill="#f4f4f4"/><rect x="1.40" y="6.05" width="2.6" height="1.8" fill="#f4f4f4"/><rect x="5.25" y="6.05" width="2.6" height="1.8" fill="#f4f4f4"/><rect x="9.10" y="6.05" width="2.6" height="1.8" fill="#f4f4f4"/><rect x="1.40" y="8.90" width="2.6" height="1.8" fill="#f4f4f4"/><rect x="5.25" y="8.90" width="2.6" height="1.8" fill="#f4f4f4"/><rect x="9.10" y="8.90" width="2.6" height="1.8" fill="#f4f4f4"/></g><path d="M918.5 306.5 L923.0 310.5 L918.5 314.5 Z" fill="#1e2a44"/><g transform="translate(933,302) scale(1.0)"><path d="M6 0.8 L11.2 3.5 L11.2 9.5 L6 12.2 L0.8 9.5 L0.8 3.5 Z M0.8 3.5 L6 6.2 L11.2 3.5 M6 6.2 V12.2" fill="#f2f2f2" stroke="#3b3b3b" stroke-width="1.2" stroke-linejoin="round"/><path d="M7.5 8 L12 5.5 L14 7 L14 11.5 L9.5 14 L7.5 12.8 Z" fill="#3b3b3b"/></g><rect x="950.5" y="317.5" width="631" height="15" fill="#fff5c2" stroke="#222" stroke-width="1" stroke-dasharray="1 1"/><g transform="translate(936,318.5) scale(1.0)"><rect x="0.6" y="0.6" width="7.8" height="12.8" rx="1" fill="#f2f2f2" stroke="#2b2b2b" stroke-width="1.2"/><rect x="2" y="2" width="5" height="2" fill="#2b2b2b"/><rect x="2.00" y="5.00" width="1" height="1" fill="#2b2b2b"/><rect x="3.90" y="5.00" width="1" height="1" fill="#2b2b2b"/><rect x="5.80" y="5.00" width="1" height="1" fill="#2b2b2b"/><rect x="2.00" y="6.90" width="1" height="1" fill="#2b2b2b"/><rect x="3.90" y="6.90" width="1" height="1" fill="#2b2b2b"/><rect x="5.80" y="6.90" width="1" height="1" fill="#2b2b2b"/><rect x="2.00" y="8.80" width="1" height="1" fill="#2b2b2b"/><rect x="3.90" y="8.80" width="1" height="1" fill="#2b2b2b"/><rect x="2.00" y="10.70" width="1" height="1" fill="#2b2b2b"/><rect x="3.90" y="10.70" width="1" height="1" fill="#2b2b2b"/><rect x="5.8" y="8.8" width="1.1" height="3" fill="#2b2b2b"/></g><g transform="translate(936,334.5) scale(1.0)"><rect x="0.6" y="0.6" width="7.8" height="12.8" rx="1" fill="#f2f2f2" stroke="#2b2b2b" stroke-width="1.2"/><rect x="2" y="2" width="5" height="2" fill="#2b2b2b"/><rect x="2.00" y="5.00" width="1" height="1" fill="#2b2b2b"/><rect x="3.90" y="5.00" width="1" height="1" fill="#2b2b2b"/><rect x="5.80" y="5.00" width="1" height="1" fill="#2b2b2b"/><rect x="2.00" y="6.90" width="1" height="1" fill="#2b2b2b"/><rect x="3.90" y="6.90" width="1" height="1" fill="#2b2b2b"/><rect x="5.80" y="6.90" width="1" height="1" fill="#2b2b2b"/><rect x="2.00" y="8.80" width="1" height="1" fill="#2b2b2b"/><rect x="3.90" y="8.80" width="1" height="1" fill="#2b2b2b"/><rect x="2.00" y="10.70" width="1" height="1" fill="#2b2b2b"/><rect x="3.90" y="10.70" width="1" height="1" fill="#2b2b2b"/><rect x="5.8" y="8.8" width="1.1" height="3" fill="#2b2b2b"/></g><g transform="translate(936,350.5) scale(1.0)"><rect x="0.6" y="0.6" width="7" height="12" fill="#f2f2f2" stroke="#2b2b2b" stroke-width="1.2"/><rect x="0.6" y="0.6" width="7" height="2" fill="#2b2b2b"/><path d="M0.6 5 h7 M0.6 8.8 h7" stroke="#2b2b2b" stroke-width="1"/></g><g transform="translate(936,366.5) scale(1.0)"><rect x="0.6" y="0.6" width="7" height="12" fill="#f2f2f2" stroke="#2b2b2b" stroke-width="1.2"/><rect x="0.6" y="0.6" width="7" height="2" fill="#2b2b2b"/><path d="M0.6 5 h7 M0.6 8.8 h7" stroke="#2b2b2b" stroke-width="1"/></g><path d="M899 386.5 L903.5 390.5 L899 394.5 Z" fill="#1e2a44"/><g transform="translate(914,383.3) scale(1.0)"><rect x="0" y="0" width="13" height="12" fill="#3b3b3b"/><rect x="1.40" y="3.20" width="2.6" height="1.8" fill="#f4f4f4"/><rect x="5.25" y="3.20" width="2.6" height="1.8" fill="#f4f4f4"/><rect x="9.10" y="3.20" width="2.6" height="1.8" fill="#f4f4f4"/><rect x="1.40" y="6.05" width="2.6" height="1.8" fill="#f4f4f4"/><rect x="5.25" y="6.05" width="2.6" height="1.8" fill="#f4f4f4"/><rect x="9.10" y="6.05" width="2.6" height="1.8" fill="#f4f4f4"/><rect x="1.40" y="8.90" width="2.6" height="1.8" fill="#f4f4f4"/><rect x="5.25" y="8.90" width="2.6" height="1.8" fill="#f4f4f4"/><rect x="9.10" y="8.90" width="2.6" height="1.8" fill="#f4f4f4"/></g><path d="M899 402.5 L903.5 406.5 L899 410.5 Z" fill="#1e2a44"/><g transform="translate(914,399.3) scale(1.0)"><rect x="0" y="0" width="13" height="12" fill="#3b3b3b"/><rect x="1.40" y="3.20" width="2.6" height="1.8" fill="#f4f4f4"/><rect x="5.25" y="3.20" width="2.6" height="1.8" fill="#f4f4f4"/><rect x="9.10" y="3.20" width="2.6" height="1.8" fill="#f4f4f4"/><rect x="1.40" y="6.05" width="2.6" height="1.8" fill="#f4f4f4"/><rect x="5.25" y="6.05" width="2.6" height="1.8" fill="#f4f4f4"/><rect x="9.10" y="6.05" width="2.6" height="1.8" fill="#f4f4f4"/><rect x="1.40" y="8.90" width="2.6" height="1.8" fill="#f4f4f4"/><rect x="5.25" y="8.90" width="2.6" height="1.8" fill="#f4f4f4"/><rect x="9.10" y="8.90" width="2.6" height="1.8" fill="#f4f4f4"/></g><path d="M899 418.5 L903.5 422.5 L899 426.5 Z" fill="#1e2a44"/><g transform="translate(914,415.3) scale(1.0)"><rect x="0" y="0" width="13" height="12" fill="#3b3b3b"/><rect x="1.40" y="3.20" width="2.6" height="1.8" fill="#f4f4f4"/><rect x="5.25" y="3.20" width="2.6" height="1.8" fill="#f4f4f4"/><rect x="9.10" y="3.20" width="2.6" height="1.8" fill="#f4f4f4"/><rect x="1.40" y="6.05" width="2.6" height="1.8" fill="#f4f4f4"/><rect x="5.25" y="6.05" width="2.6" height="1.8" fill="#f4f4f4"/><rect x="9.10" y="6.05" width="2.6" height="1.8" fill="#f4f4f4"/><rect x="1.40" y="8.90" width="2.6" height="1.8" fill="#f4f4f4"/><rect x="5.25" y="8.90" width="2.6" height="1.8" fill="#f4f4f4"/><rect x="9.10" y="8.90" width="2.6" height="1.8" fill="#f4f4f4"/></g><path d="M879 434 L883.5 438 L879 442 Z" fill="#1e2a44"/><path d="M894 431.5 h5 l1.5 1.5 h6.5 v9.5 h-13 Z" fill="#dcb377"/><rect x="900" y="433.0" width="7" height="1.2" fill="#f2ead8"/><g fill="#fff" opacity="0.9"><rect x="857" y="630" width="5" height="5"/><rect x="860" y="636" width="5" height="5"/><rect x="860" y="641" width="5" height="5"/></g><g fill="#1e1e1e"><rect x="858" y="631" width="3" height="3"/><rect x="863" y="632" width="7" height="1.2"/><rect x="861" y="637" width="3" height="3"/><rect x="866" y="638" width="6" height="1.2"/><rect x="861" y="642" width="3" height="3"/><rect x="866" y="643" width="6" height="1.2"/></g><path d="M965.5 630.5 h9 l3.5 3.5 v12 h-12.5 Z" fill="#fafafa"/><path d="M966.7 631.7 h7.3 l2.8 2.8 v10.3 h-10.1 Z" fill="#fafafa" stroke="#333" stroke-width="1.1"/><path d="M972 635.8 h3 M972 638.8 h3 M972 641.8 h3" stroke="#333" stroke-width="1"/><path d="M962.5 646 L964.5 640.5 h5.5 L972 646 Z" fill="#fafafa"/><path d="M963.5 645 L965.5 641 h3.5 L971 645 Z" fill="#333"/><rect x="964" y="636" width="6" height="1.3" fill="#333"/><rect x="966.2" y="636.5" width="1.4" height="4.5" fill="#333"/><circle cx="1121" cy="634.8" r="4.2" fill="#f4f4f4" stroke="#f4f4f4" stroke-width="2.2" stroke-dasharray="1.6 1.4"/><circle cx="1121" cy="634.8" r="3.6" fill="#f4f4f4" stroke="#333" stroke-width="0.9"/><circle cx="1121" cy="634.8" r="1.3" fill="#222"/><circle cx="1115" cy="640.8" r="4.4" fill="#f4f4f4" stroke="#f4f4f4" stroke-width="2.2" stroke-dasharray="1.6 1.4"/><circle cx="1115" cy="640.8" r="3.8000000000000003" fill="#f4f4f4" stroke="#333" stroke-width="0.9"/><circle cx="1115" cy="640.8" r="1.3" fill="#222"/><rect x="1211.3" y="633" width="2" height="10.5" fill="#f4f4f4"/><path d="M1213.8 634.3 L1220.3 638.3 L1213.8 642.3 Z" fill="#1e6ad0"/><path d="M1222.5 633.5 h-1 v10 h1" stroke="#f4f4f4" stroke-width="1.2" fill="none"/><rect x="1104.5" y="626" width="1" height="25" fill="#56647f"/><rect x="1203.5" y="626" width="1" height="25" fill="#56647f"/><rect x="1275.5" y="626" width="1" height="25" fill="#56647f"/><rect x="852.5" y="683.5" width="33" height="30.5" fill="#fdefa3" stroke="#e2c267" stroke-width="1"/><g fill="#1e1e1e"><rect x="861" y="691" width="5" height="5"/><rect x="861" y="700" width="5" height="5"/><rect x="867" y="692" width="6" height="1"/><rect x="867" y="694" width="6" height="1"/><rect x="867" y="696" width="6" height="1"/><rect x="867" y="701" width="5" height="1"/><rect x="867" y="703.5" width="5" height="1"/><rect x="873" y="703.5" width="1" height="1"/></g><path d="M862 693.5 h3 M863.5 692 v3 M862 702.5 h3 M863.5 701 v3" stroke="#fff" stroke-width="0.9"/><rect x="896" y="691" width="7" height="7" fill="#2b2b2b"/><path d="M897.5 697 l2 -5 l2 5 M898.3 695.3 h2.4" stroke="#fff" stroke-width="1" fill="none"/><path d="M896.5 701 h6 l-6 5 h6" stroke="#2b2b2b" stroke-width="1.6" fill="none"/><path d="M908 692 v12 M905 701 l3 3.5 l3 -3.5" stroke="#0d55a8" stroke-width="1.8" fill="none"/><path d="M856 731.5 l4 4 l4 -4" stroke="#1e2a44" stroke-width="1.4" fill="none"/><path d="M1563.5 730 h9 l-4.5 -5 Z" fill="#6e7a96"/><rect x="1560" y="736" width="17" height="25.5" fill="#a3abbf"/><path d="M1563.5 804.5 h9 l-4.5 5 Z" fill="#6e7a96"/><path d="M856 805 l4 4 l-4 4" stroke="#6e7a96" stroke-width="1.3" fill="none"/><g fill="#e8ebf2"><text x="1097" y="917" font-size="7" font-family="Liberation Sans" font-weight="bold" fill="#e8ebf2">AB</text></g><path d="M1104 921 l6 -6 l2 2 l-6 6 Z" fill="#e8ebf2"/><rect x="1277.5" y="910.5" width="13" height="12" fill="none" stroke="#e8ebf2" stroke-width="1" stroke-dasharray="1.5 1"/><rect x="1280" y="913" width="8" height="7" fill="#e8ebf2"/><g fill="#e8ebf2"><rect x="1479" y="910" width="12.5" height="3.2"/><rect x="1479" y="914.5" width="12.5" height="3.2"/><rect x="1479" y="919" width="12.5" height="3.2"/></g></svg>
<div class="t tt" style="left:891.97px;top:176.13px;font-size:12.6px;font-family:'Liberation Sans',sans-serif;color:#1e1e1e;-webkit-text-stroke:0.2px currentColor;letter-spacing:0.000px;">Model</div>
<div class="t tt" style="left:29.61px;top:12.75px;font-size:15.3px;font-family:'Liberation Sans',sans-serif;color:#1b2540;-webkit-text-stroke:0.2px currentColor;letter-spacing:-0.155px;">Simple Contoso.pbix (localhost:52941) - Tabular Editor 3.0.7 - Desktop Edition</div>
<div class="t tt" style="left:25.56px;top:45.85px;font-size:12.7px;font-family:'Liberation Sans',sans-serif;color:#1b2540;-webkit-text-stroke:0.2px currentColor;letter-spacing:-0.416px;">File</div>
<div class="t tt" style="left:55.86px;top:45.85px;font-size:12.7px;font-family:'Liberation Sans',sans-serif;color:#1b2540;-webkit-text-stroke:0.2px currentColor;letter-spacing:-0.313px;">Edit</div>
<div class="t tt" style="left:89.74px;top:45.85px;font-size:12.7px;font-family:'Liberation Sans',sans-serif;color:#1b2540;-webkit-text-stroke:0.2px currentColor;letter-spacing:-0.719px;">View</div>
<div class="t tt" style="left:127.36px;top:45.85px;font-size:12.7px;font-family:'Liberation Sans',sans-serif;color:#1b2540;-webkit-text-stroke:0.2px currentColor;letter-spacing:-0.431px;">C# Script</div>
<div class="t tt" style="left:188.16px;top:45.85px;font-size:12.7px;font-family:'Liberation Sans',sans-serif;color:#1b2540;-webkit-text-stroke:0.2px currentColor;letter-spacing:-0.495px;">Measure</div>
<div class="t tt" style="left:246.06px;top:45.85px;font-size:12.7px;font-family:'Liberation Sans',sans-serif;color:#1b2540;-webkit-text-stroke:0.2px currentColor;letter-spacing:0.282px;">Model</div>
<div class="t tt" style="left:293.71px;top:45.85px;font-size:12.7px;font-family:'Liberation Sans',sans-serif;color:#1b2540;-webkit-text-stroke:0.2px currentColor;letter-spacing:-0.295px;">Tools</div>
<div class="t tt" style="left:334.84px;top:45.85px;font-size:12.7px;font-family:'Liberation Sans',sans-serif;color:#1b2540;-webkit-text-stroke:0.2px currentColor;letter-spacing:-0.220px;">Window</div>
<div class="t tt" style="left:390.96px;top:45.85px;font-size:12.7px;font-family:'Liberation Sans',sans-serif;color:#1b2540;-webkit-text-stroke:0.2px currentColor;letter-spacing:0.027px;">Help</div>
<div class="t tt" style="left:22.47px;top:101.82px;font-size:12.5px;font-family:'Liberation Sans',sans-serif;color:#f2f4f8;-webkit-text-stroke:0.2px currentColor;letter-spacing:-0.458px;">Expression Editor</div>
<div class="t tt" style="left:170.92px;top:101.82px;font-size:12.5px;font-family:'Liberation Sans',sans-serif;color:#ffffff;-webkit-text-stroke:0.2px currentColor;letter-spacing:-0.304px;">Time Intelligence Calculation Group Creation.csx</div>
<div class="t tt" style="left:853.92px;top:101.02px;font-size:12.5px;font-family:'Liberation Sans',sans-serif;color:#1e1e1e;-webkit-text-stroke:0.2px currentColor;letter-spacing:-0.535px;">TOM Explorer</div>
<div class="t tt" style="left:852.97px;top:154.62px;font-size:12.5px;font-family:'Liberation Sans',sans-serif;color:#8e98b8;-webkit-text-stroke:0.2px currentColor;letter-spacing:0.000px;">Enter text to search</div>
<div class="t tt" style="left:913.02px;top:271.13px;font-size:12.6px;font-family:'Liberation Sans',sans-serif;color:#1e1e1e;-webkit-text-stroke:0.2px currentColor;letter-spacing:-0.674px;">Tables</div>
<div class="t tt" style="left:932.66px;top:287.13px;font-size:12.6px;font-family:'Liberation Sans',sans-serif;color:#1e1e1e;-webkit-text-stroke:0.2px currentColor;letter-spacing:-0.362px;">Colors</div>
<div class="t tt" style="left:952.37px;top:303.13px;font-size:12.6px;font-family:'Liberation Sans',sans-serif;color:#1e1e1e;-webkit-text-stroke:0.2px currentColor;letter-spacing:-0.168px;">Partitions</div>
<div class="t tt" style="left:952.37px;top:318.73px;font-size:12.6px;font-family:'Liberation Sans',sans-serif;color:#1e1e1e;-webkit-text-stroke:0.2px currentColor;letter-spacing:-0.442px;">Data Problems</div>
<div class="t tt" style="left:952.43px;top:334.73px;font-size:12.6px;font-family:'Liberation Sans',sans-serif;color:#1e1e1e;-webkit-text-stroke:0.2px currentColor;letter-spacing:-0.342px;">Unmapped Colors</div>
<div class="t tt" style="left:952.86px;top:350.73px;font-size:12.6px;font-family:'Liberation Sans',sans-serif;color:#1e1e1e;-webkit-text-stroke:0.2px currentColor;letter-spacing:-0.290px;">Color</div>
<div class="t tt" style="left:952.86px;top:366.63px;font-size:12.6px;font-family:'Liberation Sans',sans-serif;color:#1e1e1e;-webkit-text-stroke:0.2px currentColor;letter-spacing:-0.344px;">Color Group</div>
<div class="t tt" style="left:932.57px;top:382.83px;font-size:12.6px;font-family:'Liberation Sans',sans-serif;color:#1e1e1e;-webkit-text-stroke:0.2px currentColor;letter-spacing:-0.605px;">Date</div>
<div class="t tt" style="left:932.57px;top:398.83px;font-size:12.6px;font-family:'Liberation Sans',sans-serif;color:#1e1e1e;-webkit-text-stroke:0.2px currentColor;letter-spacing:-0.163px;">Product</div>
<div class="t tt" style="left:933.03px;top:414.73px;font-size:12.6px;font-family:'Liberation Sans',sans-serif;color:#1e1e1e;-webkit-text-stroke:0.2px currentColor;letter-spacing:-1.347px;">Sales</div>
<div class="t tt" style="left:913.02px;top:430.63px;font-size:12.6px;font-family:'Liberation Sans',sans-serif;color:#1e1e1e;-webkit-text-stroke:0.2px currentColor;letter-spacing:-0.446px;">Translations</div>
<div class="t tt" style="left:877.32px;top:632.82px;font-size:12.5px;font-family:'Liberation Sans',sans-serif;color:#1e1e1e;-webkit-text-stroke:0.2px currentColor;letter-spacing:-0.535px;">TOM Explorer</div>
<div class="t tt" style="left:981.47px;top:632.82px;font-size:12.5px;font-family:'Liberation Sans',sans-serif;color:#eef0f6;-webkit-text-stroke:0.2px currentColor;letter-spacing:-0.444px;">Best Practice Analyzer</div>
<div class="t tt" style="left:1128.97px;top:632.82px;font-size:12.5px;font-family:'Liberation Sans',sans-serif;color:#eef0f6;-webkit-text-stroke:0.2px currentColor;letter-spacing:-0.565px;">Data Refresh</div>
<div class="t tt" style="left:1228.47px;top:632.82px;font-size:12.5px;font-family:'Liberation Sans',sans-serif;color:#eef0f6;-webkit-text-stroke:0.2px currentColor;letter-spacing:-0.161px;">Macros</div>
<div class="t tt" style="left:853.47px;top:661.22px;font-size:12.5px;font-family:'Liberation Sans',sans-serif;color:#dfe6f5;-webkit-text-stroke:0.2px currentColor;letter-spacing:-0.334px;">Properties</div>
<div class="t tt" style="left:876.78px;top:726.01px;font-size:18.3px;font-family:'Liberation Sans',sans-serif;color:#1b2540;font-weight:bold;letter-spacing:-1.109px;">Basic</div>
<div class="t tt" style="left:876.52px;top:753.56px;font-size:18px;font-family:'Liberation Sans',sans-serif;color:#1b2540;-webkit-text-stroke:0.2px currentColor;letter-spacing:0.110px;">Description</div>
<div class="t tt" style="left:876.52px;top:780.36px;font-size:18px;font-family:'Liberation Sans',sans-serif;color:#1b2540;-webkit-text-stroke:0.2px currentColor;letter-spacing:-0.136px;">Display Folder</div>
<div class="t tt" style="left:856.53px;top:827.58px;font-size:17.5px;font-family:'Liberation Sans',sans-serif;color:#1b2540;font-weight:bold;letter-spacing:0.966px;">Name</div>
<div class="t tt" style="left:857.31px;top:852.84px;font-size:17.2px;font-family:'Liberation Sans',sans-serif;color:#1b2540;-webkit-text-stroke:0.2px currentColor;letter-spacing:0.320px;">The name of this object. Warning: Changing the name can break formula logic, if Automa...</div>
<div class="t tt" style="left:15.27px;top:866.22px;font-size:12.5px;font-family:'Liberation Sans',sans-serif;color:#dfe6f5;-webkit-text-stroke:0.2px currentColor;letter-spacing:0.000px;">Messages</div>
<div class="t tt" style="left:14.37px;top:912.22px;font-size:12.5px;font-family:'Liberation Sans',sans-serif;color:#ffffff;-webkit-text-stroke:0.2px currentColor;letter-spacing:-0.178px;">Model Loaded.</div>
<div class="t tt" style="left:989.55px;top:913.47px;font-size:12.2px;font-family:'Liberation Sans',sans-serif;color:#ffffff;font-weight:bold;letter-spacing:-0.640px;">64 BP issues</div>
<div class="t tt" style="left:1115.97px;top:912.22px;font-size:12.5px;font-family:'Liberation Sans',sans-serif;color:#ffffff;-webkit-text-stroke:0.2px currentColor;letter-spacing:-0.472px;">Ln 14</div>
<div class="t tt" style="left:1156.77px;top:912.22px;font-size:12.5px;font-family:'Liberation Sans',sans-serif;color:#ffffff;-webkit-text-stroke:0.2px currentColor;letter-spacing:-0.395px;">Col 57</div>
<div class="t tt" style="left:1212.75px;top:912.22px;font-size:12.5px;font-family:'Liberation Sans',sans-serif;color:#ffffff;-webkit-text-stroke:0.2px currentColor;letter-spacing:-0.358px;">INS</div>
<div class="t tt" style="left:1296.67px;top:912.22px;font-size:12.5px;font-family:'Liberation Sans',sans-serif;color:#ffffff;-webkit-text-stroke:0.2px currentColor;letter-spacing:-0.373px;">Measure &quot;Data Problems&quot;</div>
<div class="t tt" style="left:1496.86px;top:912.22px;font-size:12.5px;font-family:'Liberation Sans',sans-serif;color:#ffffff;-webkit-text-stroke:0.2px currentColor;letter-spacing:-0.459px;">localhost:52941</div>
<svg style="left:0;top:0" width="1594" height="941" viewBox="0 0 1594 941"><defs><filter id="sh" x="-30%" y="-30%" width="160%" height="160%"><feGaussianBlur stdDeviation="2"/></filter></defs><circle cx="741" cy="309.5" r="50" fill="#000" opacity="0.32" filter="url(#sh)"/><circle cx="740" cy="306" r="50" fill="#f4a81e"/><path d="M691 293 h7 M782 293 h7" stroke="#3d3a45" stroke-width="3.6"/><path d="M723 291 q16.5 -11 33 0" stroke="#3d3a45" stroke-width="3.8" fill="none"/><circle cx="710.6" cy="293" r="12" fill="#fff" stroke="#3d3a45" stroke-width="4.3"/><circle cx="769.2" cy="293" r="12" fill="#fff" stroke="#3d3a45" stroke-width="4.3"/><circle cx="710.6" cy="293" r="5.8" fill="#3d3a45"/><circle cx="769.2" cy="293" r="5.8" fill="#3d3a45"/><path d="M727 315 q13 9.5 26 0 q-1.5 14 -13 14 q-11.5 0 -13 -14 Z" fill="#3d3a45"/></svg>
<div class="a" style="left:0;top:530px;width:607px;height:42px;background:#eef75a;mix-blend-mode:multiply"></div>
<div class="a" style="left:899px;top:104px;width:482px;height:164px;border:4px solid #f2403f;background:#fff"></div>
<div class="a" style="left:903px;top:108px;width:474px;height:156px;overflow:hidden">
<div class="a" style="left:0;top:0;width:1594px;height:941px;transform-origin:0 0;transform:translate(-2723.9px,-870px) scale(3)">
<svg style="left:0;top:0" width="1594" height="941" viewBox="0 0 1594 941"><g transform="translate(914,287) scale(1.0)"><rect x="0" y="0" width="13" height="12" fill="#3b3b3b"/><rect x="1.40" y="3.20" width="2.6" height="1.8" fill="#f4f4f4"/><rect x="5.25" y="3.20" width="2.6" height="1.8" fill="#f4f4f4"/><rect x="9.10" y="3.20" width="2.6" height="1.8" fill="#f4f4f4"/><rect x="1.40" y="6.05" width="2.6" height="1.8" fill="#f4f4f4"/><rect x="5.25" y="6.05" width="2.6" height="1.8" fill="#f4f4f4"/><rect x="9.10" y="6.05" width="2.6" height="1.8" fill="#f4f4f4"/><rect x="1.40" y="8.90" width="2.6" height="1.8" fill="#f4f4f4"/><rect x="5.25" y="8.90" width="2.6" height="1.8" fill="#f4f4f4"/><rect x="9.10" y="8.90" width="2.6" height="1.8" fill="#f4f4f4"/></g><path d="M918.5 306.5 L923.0 310.5 L918.5 314.5 Z" fill="#1e2a44"/><g transform="translate(933,302) scale(1.0)"><path d="M6 0.8 L11.2 3.5 L11.2 9.5 L6 12.2 L0.8 9.5 L0.8 3.5 Z M0.8 3.5 L6 6.2 L11.2 3.5 M6 6.2 V12.2" fill="#f2f2f2" stroke="#3b3b3b" stroke-width="1.2" stroke-linejoin="round"/><path d="M7.5 8 L12 5.5 L14 7 L14 11.5 L9.5 14 L7.5 12.8 Z" fill="#3b3b3b"/></g><rect x="950.5" y="317.5" width="631" height="15" fill="#fff5c2"/><path d="M950.5 317.5 H1581 M950.5 332.5 H1581 M950.5 317.5 V332.5" stroke="#111" stroke-width="1" stroke-dasharray="1 1" fill="none"/><g transform="translate(936,318.5) scale(1.0)"><rect x="0.6" y="0.6" width="7.8" height="12.8" rx="1" fill="#f2f2f2" stroke="#2b2b2b" stroke-width="1.2"/><rect x="2" y="2" width="5" height="2" fill="#2b2b2b"/><rect x="2.00" y="5.00" width="1" height="1" fill="#2b2b2b"/><rect x="3.90" y="5.00" width="1" height="1" fill="#2b2b2b"/><rect x="5.80" y="5.00" width="1" height="1" fill="#2b2b2b"/><rect x="2.00" y="6.90" width="1" height="1" fill="#2b2b2b"/><rect x="3.90" y="6.90" width="1" height="1" fill="#2b2b2b"/><rect x="5.80" y="6.90" width="1" height="1" fill="#2b2b2b"/><rect x="2.00" y="8.80" width="1" height="1" fill="#2b2b2b"/><rect x="3.90" y="8.80" width="1" height="1" fill="#2b2b2b"/><rect x="2.00" y="10.70" width="1" height="1" fill="#2b2b2b"/><rect x="3.90" y="10.70" width="1" height="1" fill="#2b2b2b"/><rect x="5.8" y="8.8" width="1.1" height="3" fill="#2b2b2b"/></g><g transform="translate(936,334.5) scale(1.0)"><rect x="0.6" y="0.6" width="7.8" height="12.8" rx="1" fill="#f2f2f2" stroke="#2b2b2b" stroke-width="1.2"/><rect x="2" y="2" width="5" height="2" fill="#2b2b2b"/><rect x="2.00" y="5.00" width="1" height="1" fill="#2b2b2b"/><rect x="3.90" y="5.00" width="1" height="1" fill="#2b2b2b"/><rect x="5.80" y="5.00" width="1" height="1" fill="#2b2b2b"/><rect x="2.00" y="6.90" width="1" height="1" fill="#2b2b2b"/><rect x="3.90" y="6.90" width="1" height="1" fill="#2b2b2b"/><rect x="5.80" y="6.90" width="1" height="1" fill="#2b2b2b"/><rect x="2.00" y="8.80" width="1" height="1" fill="#2b2b2b"/><rect x="3.90" y="8.80" width="1" height="1" fill="#2b2b2b"/><rect x="2.00" y="10.70" width="1" height="1" fill="#2b2b2b"/><rect x="3.90" y="10.70" width="1" height="1" fill="#2b2b2b"/><rect x="5.8" y="8.8" width="1.1" height="3" fill="#2b2b2b"/></g></svg>
<div class="t" style="left:932.66px;top:287.13px;font-size:12.6px;font-family:'Liberation Sans',sans-serif;color:#1e1e1e;-webkit-text-stroke:0.2px currentColor;-webkit-text-stroke:0.28px #1e1e1e;letter-spacing:-0.362px;">Colors</div>
<div class="t" style="left:952.37px;top:303.13px;font-size:12.6px;font-family:'Liberation Sans',sans-serif;color:#1e1e1e;-webkit-text-stroke:0.2px currentColor;-webkit-text-stroke:0.28px #1e1e1e;letter-spacing:-0.168px;">Partitions</div>
<div class="t" style="left:952.37px;top:318.73px;font-size:12.6px;font-family:'Liberation Sans',sans-serif;color:#1e1e1e;-webkit-text-stroke:0.2px currentColor;-webkit-text-stroke:0.28px #1e1e1e;letter-spacing:-0.442px;">Data Problems</div>
<div class="t" style="left:952.43px;top:334.73px;font-size:12.6px;font-family:'Liberation Sans',sans-serif;color:#1e1e1e;-webkit-text-stroke:0.2px currentColor;-webkit-text-stroke:0.28px #1e1e1e;letter-spacing:-0.342px;">Unmapped Colors</div>
</div></div>
<div class="a" style="left:904px;top:286px;width:166px;height:60px;border:4px solid #f2403f"></div>
<svg style="left:0;top:0" width="1594" height="941" viewBox="0 0 1594 941"><path d="M1046 266 L1021 288" stroke="#f2403f" stroke-width="4.5"/></svg>
</body></html>
